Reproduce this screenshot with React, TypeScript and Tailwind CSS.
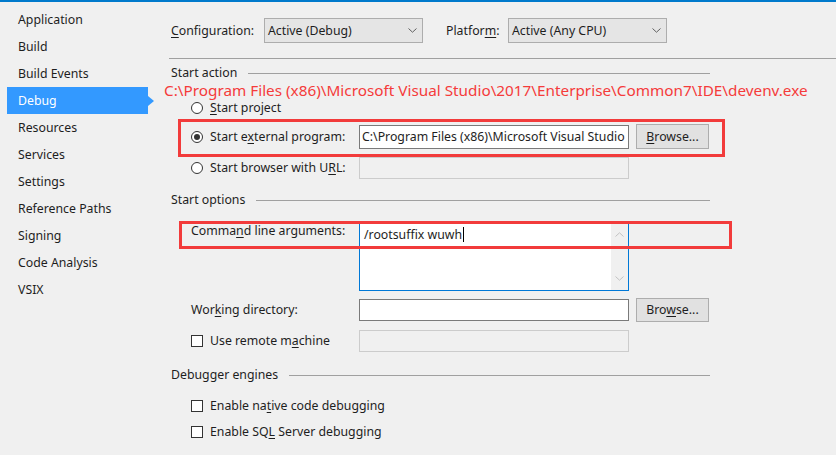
import React from "react";

const U = ({ children }: { children: React.ReactNode }) => (
  <span className="underline decoration-1 underline-offset-[2px]">{children}</span>
);

function Radio({ checked }: { checked?: boolean }) {
  return (
    <span className="w-[12px] h-[12px] rounded-full border border-[#333333] bg-white flex items-center justify-center shrink-0">
      {checked ? <span className="w-[6px] h-[6px] rounded-full bg-[#333333]" /> : null}
    </span>
  );
}

function Check() {
  return <span className="w-[12px] h-[12px] border border-[#333333] bg-white shrink-0" />;
}

function Chevron({ up, color }: { up?: boolean; color: string }) {
  return (
    <svg width="9" height="5" viewBox="0 0 9 5" className="shrink-0">
      <path
        d={up ? "M0.5 4.5 L4.5 0.8 L8.5 4.5" : "M0.5 0.5 L4.5 4.2 L8.5 0.5"}
        fill="none"
        stroke={color}
        strokeWidth="1"
      />
    </svg>
  );
}

function Combo({ text }: { text: string }) {
  return (
    <div className="w-[159px] h-[25px] border border-[#adadad] bg-[#e5e5e5] flex items-center justify-between pl-[3px] pr-[5px]">
      <span>{text}</span>
      <Chevron color="#606060" />
    </div>
  );
}

function Header({ label, className }: { label: string; className: string }) {
  return (
    <div className={"h-[16px] w-[539px] flex items-center " + className}>
      <span className="whitespace-nowrap">{label}</span>
      <div className="flex-1 ml-[11px] h-px bg-[#a0a0a0]" />
    </div>
  );
}

const items = [
  "Application",
  "Build",
  "Build Events",
  "Debug",
  "Resources",
  "Services",
  "Settings",
  "Reference Paths",
  "Signing",
  "Code Analysis",
  "VSIX",
];

export default function App() {
  return (
    <div className="relative w-[836px] h-[455px] overflow-hidden bg-[#f0f0f0] text-[12.3px] leading-[16px] text-[#1e1e1e] font-['Noto_Sans','Noto_Sans_CJK_SC',sans-serif]">
      <div className="h-[2px] bg-[#007acc]" />
      <div className="flex">
        {/* Sidebar */}
        <div className="w-[160px] shrink-0 pt-[4px] flex flex-col">
          {items.map((it) => (
            <div key={it} className="h-[27px] flex">
              {it === "Debug" ? (
                <div className="relative ml-[7px] w-[141px] h-full flex items-center pl-[11px] bg-[#3399ff] text-white">
                  {it}
                  <span className="absolute right-[-6px] top-1/2 -translate-y-1/2 w-0 h-0 border-y-[5px] border-y-transparent border-l-[6px] border-l-[#3399ff]" />
                </div>
              ) : (
                <div className="ml-[7px] w-[141px] h-full flex items-center pl-[11px]">{it}</div>
              )}
            </div>
          ))}
        </div>

        {/* Main */}
        <div className="flex-1 flex flex-col pl-[11px]">
          <div className="mt-[16px] h-[25px] flex items-center">
            <span className="w-[93px]">
              <U>C</U>onfiguration:
            </span>
            <Combo text="Active (Debug)" />
            <span className="ml-[23px] w-[62px]">
              Platfor<U>m</U>:
            </span>
            <Combo text="Active (Any CPU)" />
          </div>
          <div className="mt-[15px] ml-[-2px] h-px bg-[#a0a0a0]" />

          <Header label="Start action" className="mt-[6px]" />

          <div className="mt-[17px] h-[20px] ml-[20px] flex items-center gap-[7px]">
            <Radio />
            <span>
              <U>S</U>tart project
            </span>
          </div>

          <div className="mt-[6px] h-[25px] ml-[20px] flex items-center">
            <div className="w-[168px] flex items-center gap-[7px]">
              <Radio checked />
              <span>
                Start e<U>x</U>ternal program:
              </span>
            </div>
            <div className="w-[270px] h-[24px] border border-[#7a7a7a] bg-white flex items-center pl-[2px] overflow-hidden whitespace-nowrap">
              C:\Program Files (x86)\Microsoft Visual Studio
            </div>
            <div className="ml-[7px] w-[73px] h-[25px] border border-[#adadad] bg-[#e1e1e1] flex items-center justify-center">
              <span>
                <U>B</U>rowse...
              </span>
            </div>
          </div>

          <div className="mt-[8px] h-[22px] ml-[20px] flex items-center">
            <div className="w-[168px] flex items-center gap-[7px]">
              <Radio />
              <span>
                Start browser with U<U>R</U>L:
              </span>
            </div>
            <div className="w-[270px] h-[22px] border border-[#cccccc] bg-[#f0f0f0]" />
          </div>

          <Header label="Start options" className="mt-[13px]" />

          <div className="mt-[14px] ml-[20px] flex items-start">
            <div className="w-[168px] pt-[1px]">
              Comma<U>n</U>d line arguments:
            </div>
            <div className="w-[270px] h-[69px] border border-[#0078d7] bg-white flex">
              <div className="flex-1 pl-[4px] pt-[4px] flex items-start">
                <span>/rootsuffix wuwh</span>
                <span className="w-px h-[15px] bg-black ml-[1px]" />
              </div>
              <div className="w-[17px] h-full bg-[#f0f0f0] flex flex-col items-center justify-between pt-[9px] pb-[9px]">
                <Chevron up color="#c2c2c2" />
                <Chevron color="#c2c2c2" />
              </div>
            </div>
          </div>

          <div className="mt-[7px] h-[24px] ml-[20px] flex items-center">
            <div className="w-[168px]">
              Wor<U>k</U>ing directory:
            </div>
            <div className="w-[270px] h-[22px] border border-[#7a7a7a] bg-white" />
            <div className="ml-[7px] w-[73px] h-[24px] border border-[#adadad] bg-[#e1e1e1] flex items-center justify-center">
              <span>
                Bro<U>w</U>se...
              </span>
            </div>
          </div>

          <div className="mt-[8px] h-[22px] ml-[20px] flex items-center">
            <div className="w-[168px] flex items-center gap-[7px]">
              <Check />
              <span>
                Use remote m<U>a</U>chine
              </span>
            </div>
            <div className="w-[270px] h-[22px] border border-[#cccccc] bg-[#f0f0f0]" />
          </div>

          <Header label="Debugger engines" className="mt-[15px]" />

          <div className="mt-[13px] h-[20px] ml-[20px] flex items-center gap-[7px]">
            <Check />
            <span>
              Enable na<U>t</U>ive code debugging
            </span>
          </div>
          <div className="mt-[6px] h-[20px] ml-[20px] flex items-center gap-[7px]">
            <Check />
            <span>
              Enable SQ<U>L</U> Server debugging
            </span>
          </div>
        </div>
      </div>

      {/* Annotations */}
      <div className="absolute left-[164px] top-[80px] text-[15.3px] leading-[20px] text-[#f53b3b] whitespace-nowrap">
        C:\Program Files (x86)\Microsoft Visual Studio\2017\Enterprise\Common7\IDE\devenv.exe
      </div>
      <div className="absolute left-[178px] top-[119px] w-[547px] h-[38px] border-[3px] border-[#f23b3b]" />
      <div className="absolute left-[179px] top-[221px] w-[553px] h-[28px] border-[3px] border-[#f23b3b]" />
    </div>
  );
}
